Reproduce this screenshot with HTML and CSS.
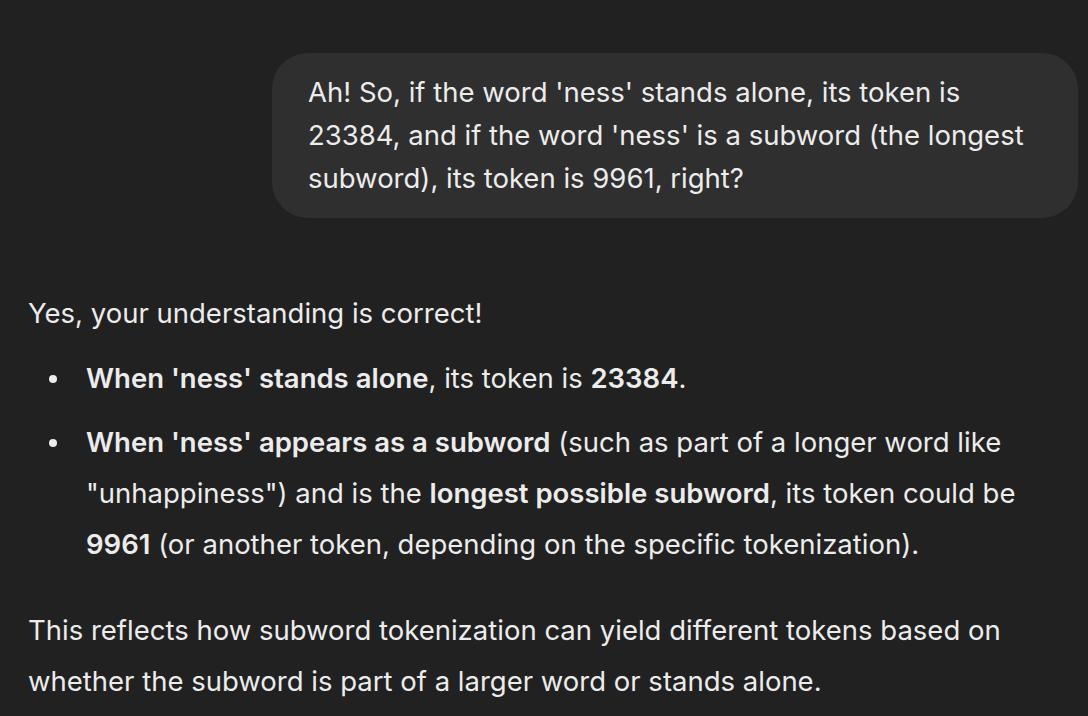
FILE: index.html
```html
<!DOCTYPE html>
<html lang="en">
<head>
<meta charset="utf-8">
<title>Chat</title>
<link rel="stylesheet" href="styles.css">
</head>
<body>
<main class="thread">
  <div class="user-row">
    <div class="bubble">Ah! So, if the word 'ness' stands alone, its token is 23384, and if the word 'ness' is a subword (the longest subword), its token is 9961, right?</div>
  </div>
  <div class="assistant">
    <p class="para first">Yes, your understanding is correct!</p>
    <ul class="list">
      <li><strong>When 'ness' stands alone</strong>, its token is <strong>23384</strong>.</li>
      <li><strong>When 'ness' appears as a subword</strong> (such as part of a longer word like "unhappiness") and is the <strong>longest possible subword</strong>, its token could be <strong>9961</strong> (or another token, depending on the specific tokenization).</li>
    </ul>
    <p class="para">This reflects how subword tokenization can yield different tokens based on whether the subword is part of a larger word or stands alone.</p>
  </div>
</main>
</body>
</html>
```
FILE: styles.css
```css
html, body {
  margin: 0;
  padding: 0;
  background: #212121;
}
body {
  color: #ececec;
  font-family: Inter, "Liberation Sans", sans-serif;
  font-size: 27.5px;
  overflow: hidden;
}
.thread {
  padding: 53px 10px 0 28px;
}
.user-row {
  display: flex;
  justify-content: flex-end;
}
.bubble {
  background: #2f2f2f;
  border-radius: 36px;
  padding: 18px 36px;
  line-height: 43px;
  width: 734px;
}
.assistant {
  margin-top: 70px;
  line-height: 51px;
  padding-right: 40px;
}
.para {
  margin: 0;
}
.list {
  margin: 14px 0 35px;
  padding-left: 58px;
  list-style: none;
}
.list li {
  position: relative;
  margin-bottom: 13px;
}
.list li:last-child {
  margin-bottom: 0;
}
.list li::before {
  content: "";
  position: absolute;
  left: -37px;
  top: 22px;
  width: 8px;
  height: 8px;
  border-radius: 50%;
  background: #ececec;
}
strong {
  font-weight: 600;
}
```
